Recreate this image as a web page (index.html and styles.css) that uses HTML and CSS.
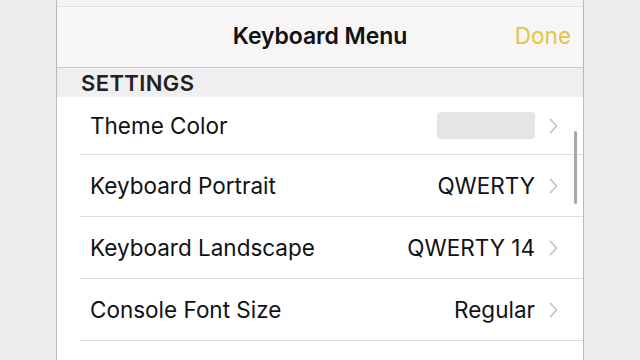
FILE: index.html
```html
<!DOCTYPE html>
<html lang="en">
<head>
    <meta charset="UTF-8">
    <title>Keyboard Menu</title>
    <link rel="stylesheet" href="styles.css">
</head>
<body>
    <div class="panel">
        <div class="top-strip"></div>

        <!-- nav bar -->
        <div class="nav">
            <div class="nav-title">Keyboard Menu</div>
            <div class="nav-done">Done</div>
        </div>

        <div class="section-head">SETTINGS</div>

        <div class="list">
            <div class="row first">
                <div class="row-label">Theme Color</div>
                <div class="row-value"><span class="swatch"></span></div>
                <svg class="chevron" viewBox="0 0 11 16"><path d="M2.5 1.5 L8.5 8 L2.5 14.5" /></svg>
            </div>
            <div class="row">
                <div class="row-label">Keyboard Portrait</div>
                <div class="row-value">QWERTY</div>
                <svg class="chevron" viewBox="0 0 11 16"><path d="M2.5 1.5 L8.5 8 L2.5 14.5" /></svg>
            </div>
            <div class="row">
                <div class="row-label">Keyboard Landscape</div>
                <div class="row-value">QWERTY 14</div>
                <svg class="chevron" viewBox="0 0 11 16"><path d="M2.5 1.5 L8.5 8 L2.5 14.5" /></svg>
            </div>
            <div class="row">
                <div class="row-label">Console Font Size</div>
                <div class="row-value">Regular</div>
                <svg class="chevron" viewBox="0 0 11 16"><path d="M2.5 1.5 L8.5 8 L2.5 14.5" /></svg>
            </div>
            <div class="row"></div>
        </div>

        <div class="scrollbar"></div>
    </div>
</body>
</html>
```
FILE: styles.css
```css
* {
    margin: 0;
    padding: 0;
    box-sizing: border-box;
}

body {
    width: 640px;
    height: 360px;
    overflow: hidden;
    background-color: #efeeee;
    font-family: 'Inter', 'Roboto', sans-serif;
    color: #111;
}

/* main panel */
.panel {
    position: relative;
    width: 528px;
    height: 360px;
    margin-left: 56px;
    border-left: 1px solid #b9b9b9;
    border-right: 1px solid #b9b9b9;
    background-color: #fff;
    overflow: hidden;
}

.top-strip {
    height: 7px;
    background-color: #f4f3f4;
    border-bottom: 1px solid #dedddf;
}

.nav {
    height: 61px;
    display: flex;
    align-items: center;
    justify-content: center;
    position: relative;
    background-color: #f7f5f6;
    border-bottom: 1px solid #c9c8ca;
}

.nav-title {
    font-size: 23px;
    font-weight: 600;
    letter-spacing: -0.1px;
    margin-top: -2px;
}

/* sits over the bar, right side */
.nav-done {
    position: absolute;
    right: 12px;
    top: 15px;
    font-size: 22.5px;
    color: #e2c447;
}

.section-head {
    height: 29px;
    padding-left: 24px;
    display: flex;
    align-items: flex-end;
    padding-bottom: 1px;
    background-color: #f1eff1;
    font-size: 22px;
    font-weight: 600;
    letter-spacing: 0.4px;
    color: #222;
}

.list {
    background-color: #fff;
}

.row {
    height: 62px;
    margin-left: 23px;
    padding-left: 10px;
    padding-right: 24px;
    display: flex;
    align-items: center;
    border-bottom: 1px solid #dcdcde;
}

.row.first {
    height: 58px;
}

.row-label {
    flex: 1;
    font-size: 22.5px;
    margin-top: -1px;
}

.row-value {
    font-size: 22.5px;
    margin-top: -1px;
    display: flex;
    align-items: center;
}

.swatch {
    display: block;
    width: 98px;
    height: 27px;
    border-radius: 4px;
    background-color: #e5e5e7;
}

.chevron {
    width: 11px;
    height: 16px;
    margin-left: 13px;
    fill: none;
    stroke: #c3c3c6;
    stroke-width: 1.8;
    stroke-linecap: round;
    stroke-linejoin: round;
}

/* scroll indicator over the list */
.scrollbar {
    position: absolute;
    right: 6px;
    top: 131px;
    width: 3px;
    height: 73px;
    border-radius: 2px;
    background-color: #a8a8a8;
}
```
